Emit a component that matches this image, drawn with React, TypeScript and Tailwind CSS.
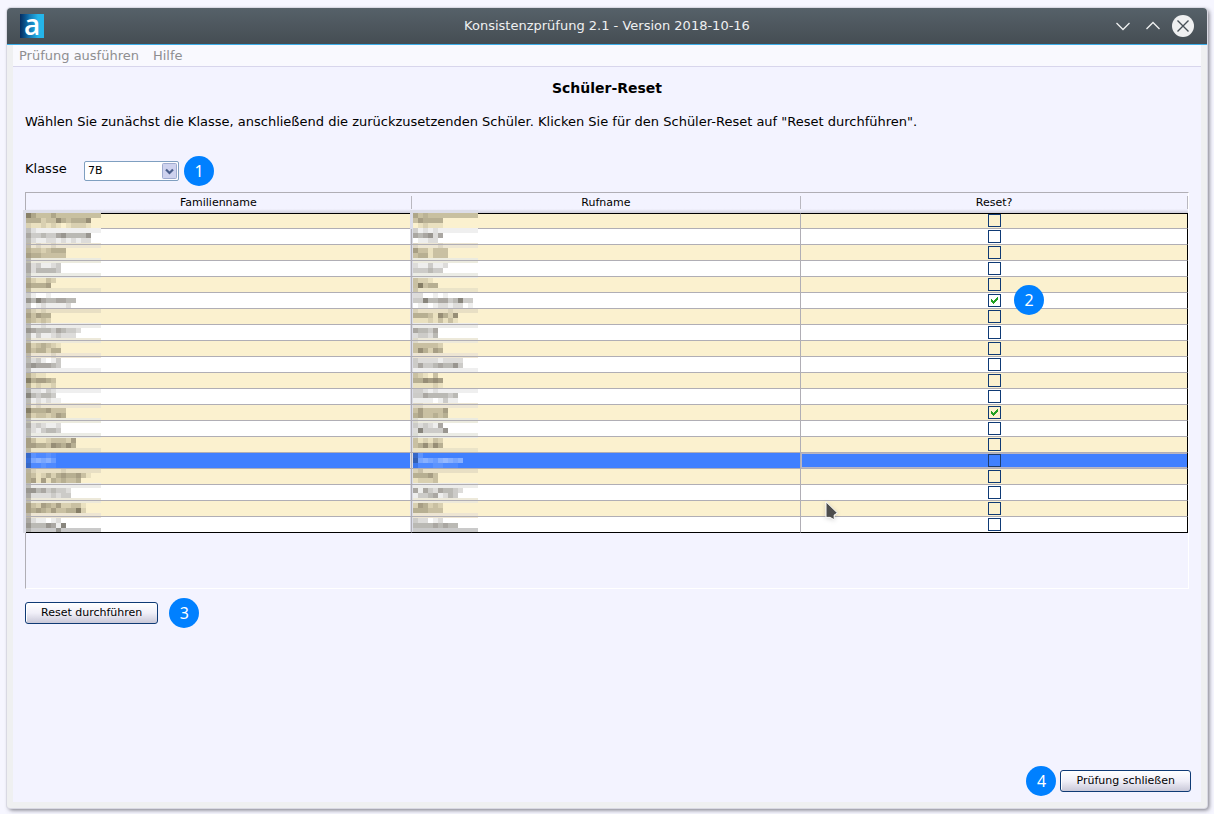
import { useState } from "react";

type Student = {
    id: number;
    reset: boolean;
};

const initialStudents: Student[] = Array.from({ length: 20 }, (_, i) => ({
    id: i + 1,
    reset: i === 5 || i === 12,
}));

const classes = ["5A", "5B", "6A", "6B", "7A", "7B"];

// Fill of each 5px line of the pixelated names, top to bottom
const mosaicFills = [
    "#c8c0a0", "#fbf1cf", "#fbf1cf", "#efefef", "#ffffff", "#ffffff", "#ede6d3", "#fbf1cf",
    "#fbf1cf", "#ecebdf", "#ffffff", "#ffffff", "#ebece5", "#fbf1cf", "#fbf1cf", "#ebe4c8",
    "#ffffff", "#ffffff", "#ffffff", "#e8dfc4", "#fbf1cf", "#fbf1cf", "#ececea", "#ffffff",
    "#ffffff", "#ede9da", "#fbf1cf", "#fbf1cf", "#ede5d3", "#ffffff", "#ffffff", "#efefef",
    "#fbf1cf", "#fbf1cf", "#fbf1cf", "#efefef", "#ffffff", "#ffffff", "#ede6d3", "#fbf1cf",
    "#fbf1cf", "#ecebdf", "#ffffff", "#ffffff", "#ebece5", "#fbf1cf", "#fbf1cf", "#ebe4c8",
    "#4080ff", "#4080ff", "#4080ff", "#e8dfc4", "#fbf1cf", "#fbf1cf", "#ececea", "#ffffff",
    "#ffffff", "#ede9da", "#fbf1cf", "#fbf1cf", "#ede5d3", "#ffffff", "#ffffff", "#cacaca",
];

// Darkness of every block, one digit each
const familyLines = [
    "520002", "4442336434446", "2112121012221", "31", "5334335644446", "4211221212122", "3010010", "43323444",
    "54433333", "3", "5231123", "5244443", "3", "421132", "54445", "3",
    "310010", "6475445544", "3012111120", "310100", "53544", "43232", "3001", "65444354332",
    "4131123222", "3", "5234321", "5344244", "3000010", "4231013", "5655543", "3",
    "4211", "745543", "412112", "411021", "743443", "4121211", "30100", "74445333",
    "52332354", "3", "5232112", "4213443", "3", "5311233325", "5544365464", "3",
    "321121", "245453", "311211", "31000001", "4312424544531", "45151434334", "3", "664534332",
    "5222232330", "3", "5325435223310", "5454353344720", "3", "5211012", "64446517", "200000400",
];

const givenLines = [
    "201000", "354444", "012111", "201010", "545625", "01122", "100001", "5331333",
    "3441333", "0", "2113112", "333433", "0", "32210", "37344", "2",
    "2200101", "337445534733", "011012212201", "10000001", "4443164260", "1112131310", "0", "54435",
    "23324", "1", "333332", "364254", "0", "3222212222", "3533454463", "0",
    "321030", "446565", "111121", "221010", "335444434", "111101311", "110000", "3533335",
    "4533434", "1", "323215", "2733336", "1", "312132", "346364", "0",
    "3200000", "4454356545", "1111221110", "120000", "44453", "12223", "0", "5153254432",
    "1334512430", "0", "254232", "444333", "0", "322012", "444454544", "000000000",
];

function Mosaic({ lines, columns, className }: { lines: string[]; columns: number; className: string }) {
    return (
        <svg
            viewBox={`-3 -3 ${columns * 5 + 3} 323`}
            preserveAspectRatio="none"
            shapeRendering="crispEdges"
            className={className}
            aria-hidden="true"
        >
            <rect x={-3} y={-3} width={columns * 5 + 3} height={323} fill="#dcdde8" />
            {mosaicFills.map((fill, row) => (
                <g key={row}>
                    <rect x={0} y={row * 5} width={columns * 5} height={5} fill={fill} />
                    {lines[row].split("").map((level, col) => (
                        <rect
                            key={col}
                            x={col * 5}
                            y={row * 5}
                            width={5}
                            height={5}
                            fill={fill === "#4080ff" && col > 0 ? "#ffffff" : "#1c1608"}
                            opacity={Number(level) * 0.075}
                        />
                    ))}
                </g>
            ))}
        </svg>
    );
}

function StepBadge({ step, className = "" }: { step: number; className?: string }) {
    return (
        <span
            className={`flex size-[30px] shrink-0 items-center justify-center rounded-full bg-[#0080ff] font-['Noto_Sans',sans-serif] text-base text-white ${className}`}
        >
            {step}
        </span>
    );
}

function PushButton({ label }: { label: string }) {
    return (
        <button
            type="button"
            className="h-[22px] rounded-[3px] border border-[#0f3a75] bg-linear-to-b from-white via-[#f0eff8] to-[#c9c8d8] px-[15px] text-[11px] leading-4 text-black shadow-[inset_1px_1px_0_#ffffff]"
        >
            {label}
        </button>
    );
}

function TitleBar() {
    return (
        <header className="flex h-[37px] items-center rounded-t-[4px] border-b border-[#3daee9] bg-linear-to-b from-[#566169] to-[#454d53] px-[13px] text-[#eff0f1]">
            <div className="flex flex-1">
                <span className="flex size-6 items-center justify-center bg-linear-to-r from-[#052c60] via-[#1478b4] via-40% to-[#25b5ea] to-75% pb-1 font-['Open_Sans',sans-serif] text-[28px] leading-6 font-semibold text-white">
                    a
                </span>
            </div>
            <h2 className="text-[13px] leading-5">Konsistenzprüfung 2.1 - Version 2018-10-16</h2>
            <div className="flex flex-1 items-center justify-end gap-2">
                <button type="button" aria-label="Minimieren">
                    <svg viewBox="0 0 22 22" className="size-[22px]" fill="none" stroke="#eff0f1" strokeWidth="1.3">
                        <path d="M4.5 8 L11 14.5 L17.5 8" />
                    </svg>
                </button>
                <button type="button" aria-label="Maximieren">
                    <svg viewBox="0 0 22 22" className="size-[22px]" fill="none" stroke="#eff0f1" strokeWidth="1.3">
                        <path d="M4.5 14 L11 7.5 L17.5 14" />
                    </svg>
                </button>
                <button type="button" aria-label="Schließen">
                    <svg viewBox="0 0 22 22" className="size-[22px]" fill="none">
                        <circle cx="11" cy="11" r="11" fill="#eff0f1" />
                        <path d="M5.5 5.5 L16.5 16.5 M16.5 5.5 L5.5 16.5" stroke="#475057" strokeWidth="1.4" />
                    </svg>
                </button>
            </div>
        </header>
    );
}

function ResetCheckbox({ student, selected, onToggle }: { student: Student; selected: boolean; onToggle: () => void }) {
    return (
        <label className="mx-auto grid size-[13px]">
            <input
                type="checkbox"
                aria-label={`Reset Schüler ${student.id}`}
                checked={student.reset}
                onChange={onToggle}
                className={`size-[13px] appearance-none border [grid-area:1/1] ${selected ? "border-[#1d3c6b]" : "border-[#0f3a75]"}`}
            />
            {student.reset && (
                <svg viewBox="0 0 13 13" className="pointer-events-none size-[13px] [grid-area:1/1]" shapeRendering="crispEdges">
                    <path
                        d="M3 5h1v1h1v1h1v-1h1v-1h1v-1h1v-1h1v3h-1v1h-1v1h-1v1h-1v1h-1v-1h-1v-1h-1z"
                        fill="#21a121"
                    />
                </svg>
            )}
        </label>
    );
}

function StudentTable() {
    const [students, setStudents] = useState(initialStudents);
    const selectedId = 16;

    const toggle = (id: number) =>
        setStudents(students.map(s => (s.id === id ? { ...s, reset: !s.reset } : s)));

    return (
        <div className="border border-t-[#b0aeb5] border-r-white border-b-white border-l-[#b0aeb5] pb-[55px]">
            <table className="w-full table-fixed border-separate border-spacing-0">
                <colgroup>
                    <col className="w-[33.2%]" />
                    <col className="w-[33.5%]" />
                    <col className="w-[33.3%]" />
                </colgroup>
                <thead>
                    <tr>
                        {["Familienname", "Rufname", "Reset?"].map((title) => (
                            <th
                                key={title}
                                scope="col"
                                className="h-5 bg-linear-to-b from-[#f3f3ff] from-80% to-[#cfcedb] p-0 pt-[3px] pb-1 text-[11px] leading-[13px] font-normal"
                            >
                                <div className="h-[13px] border-r border-[#b9b8c0] shadow-[1px_0_0_#ffffff]">{title}</div>
                            </th>
                        ))}
                    </tr>
                </thead>
                <tbody>
                    {students.map((student, i) => {
                        const selected = student.id === selectedId;
                        const last = i === students.length - 1;
                        const line = `h-4 p-0 border-b ${i === 0 ? "border-t border-t-black align-top" : ""} ${last ? "border-b-black" : "border-b-[#b0aeb5]"}`;
                        return (
                            <tr
                                key={student.id}
                                className={selected ? "bg-[#4080ff]" : i % 2 === 0 ? "bg-[#fbf1cf]" : "bg-white"}
                            >
                                <td className={`relative border-r border-r-[#b0aeb5] ${line}`}>
                                    {i === 0 && (
                                        <Mosaic lines={familyLines} columns={15} className="absolute -top-1 -left-[3px] h-[323px] w-[78px]" />
                                    )}
                                </td>
                                <td className={`relative border-r border-r-[#b0aeb5] ${line}`}>
                                    {i === 0 && (
                                        <Mosaic lines={givenLines} columns={13} className="absolute -top-1 -left-[2px] h-[323px] w-[68px]" />
                                    )}
                                </td>
                                <td
                                    className={`relative border-r border-r-black ${line} ${selected ? "shadow-[inset_1px_1px_0_#b8b6c4,inset_0_-1px_0_#b8b6c4]" : ""}`}
                                >
                                    <ResetCheckbox student={student} selected={selected} onToggle={() => toggle(student.id)} />
                                    {student.id === 6 && <StepBadge step={2} className="absolute -top-2 left-[calc(50%+20px)] z-10" />}
                                    {student.id === 19 && (
                                        <svg viewBox="0 0 14 22" className="absolute top-0 left-6 z-10 h-[22px] w-3.5 drop-shadow-sm">
                                            <path
                                                d="M1 0.8 L12.5 12 L9.2 14 L9.2 18.8 L5.2 16.4 L1 16.4 Z"
                                                fill="#4d4d4d"
                                                stroke="#ffffff"
                                                strokeWidth="1"
                                            />
                                        </svg>
                                    )}
                                </td>
                            </tr>
                        );
                    })}
                </tbody>
            </table>
        </div>
    );
}

export default function App() {
    const [schoolClass, setSchoolClass] = useState("7B");

    return (
        <div className="flex min-h-screen flex-col bg-[#f6f6ff] px-[7px] pt-2 pb-1.5 font-['DejaVu_Sans',sans-serif] text-[13px] text-black">
            <div className="flex flex-1 flex-col rounded-t-[4px] rounded-b-[3px] bg-[#eff0f1] shadow-[0_0_0_1px_#d9d9e3,2px_2px_4px_rgba(60,60,70,0.7)]">
                <TitleBar />
                <div className="mx-1.5 mb-1.5 flex flex-1 flex-col bg-[#f3f3ff]">
                    <nav className="flex h-[22px] items-center gap-[14px] border-b border-[#d8d6ec] bg-[#f9f9fe] px-1.5 text-[#8e8e90]">
                        <button type="button">Prüfung ausführen</button>
                        <button type="button">Hilfe</button>
                    </nav>

                    <main className="flex flex-1 flex-col px-3 pt-[11px] pb-1.5">
                        <h1 className="text-center text-sm leading-5 font-bold">Schüler-Reset</h1>
                        <p className="mt-[14px] leading-5">
                            Wählen Sie zunächst die Klasse, anschließend die zurückzusetzenden Schüler. Klicken Sie für den Schüler-Reset auf "Reset durchführen".
                        </p>

                        <div className="mt-6 flex items-center">
                            <label htmlFor="klasse" className="w-[59px] pb-1">
                                Klasse
                            </label>
                            <div className="mr-[5px] grid w-[95px] items-center">
                                <select
                                    id="klasse"
                                    value={schoolClass}
                                    onChange={(e) => setSchoolClass(e.target.value)}
                                    className="h-5 w-full appearance-none rounded-[2px] border border-[#7f9fc0] bg-white pl-[3px] text-[11px] leading-4 [grid-area:1/1]"
                                >
                                    {classes.map((name) => (
                                        <option key={name}>{name}</option>
                                    ))}
                                </select>
                                <svg viewBox="0 0 15 16" className="pointer-events-none mr-0.5 h-4 w-[15px] justify-self-end [grid-area:1/1]">
                                    <rect x="0.5" y="0.5" width="14" height="15" rx="1" fill="#ced2ee" stroke="#9fabcf" />
                                    <path d="M4 6.5 L7.5 10 L11 6.5" fill="none" stroke="#4b5f8c" strokeWidth="2.2" />
                                </svg>
                            </div>
                            <StepBadge step={1} />
                        </div>

                        <div className="mt-1.5">
                            <StudentTable />
                        </div>

                        <div className="mt-[9px] flex items-center gap-[11px]">
                            <PushButton label="Reset durchführen" />
                            <StepBadge step={3} />
                        </div>

                        <div className="-mr-0.5 mt-auto flex items-center justify-end gap-1">
                            <StepBadge step={4} />
                            <PushButton label="Prüfung schließen" />
                        </div>
                    </main>
                </div>
            </div>
        </div>
    );
}
